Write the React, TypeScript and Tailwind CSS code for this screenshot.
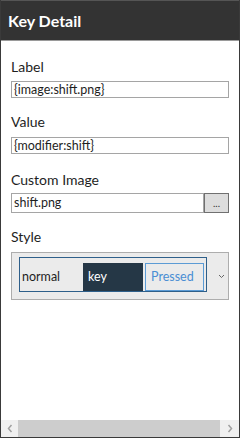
import React from "react";

const font = { fontFamily: 'Lato, "Open Sans", sans-serif' };

export default function App() {
  return (
    <div
      className="w-[240px] h-[438px] flex flex-col bg-white border-x border-b border-[#3a3a3a] overflow-hidden"
      style={font}
    >
      <div className="h-[40px] shrink-0 bg-[#333333] border-t border-[#555555] flex items-center pl-[7px]">
        <span className="text-white font-bold text-[16px] leading-none">Key Detail</span>
      </div>
      <div className="h-px bg-[#9a9a9a] shrink-0" />
      <div className="flex-1 px-[10px]">
        <div className="mt-[16px]">
          <div className="text-[14px] leading-[20px] text-[#1e1e1e]">Label</div>
          <div className="mt-[4px] h-[17px] border border-[#a5a5a5] bg-white px-[2px] text-[12.5px] leading-[15px] text-[#1e1e1e]">
            {"{image:shift.png}"}
          </div>
        </div>
        <div className="mt-[14px]">
          <div className="text-[14px] leading-[20px] text-[#1e1e1e]">Value</div>
          <div className="mt-[5px] h-[17px] border border-[#a5a5a5] bg-white px-[2px] text-[12.5px] leading-[15px] text-[#1e1e1e]">
            {"{modifier:shift}"}
          </div>
        </div>
        <div className="mt-[16px]">
          <div className="text-[14px] leading-[20px] text-[#1e1e1e]">Custom Image</div>
          <div className="mt-[3px] flex h-[20px]">
            <div className="flex-1 border border-[#a5a5a5] bg-white px-[2px] text-[12.5px] leading-[18px] text-[#1e1e1e]">
              shift.png
            </div>
            <div className="w-[25px] border border-[#707070] bg-[#dddddd] flex items-center justify-center text-[10px] leading-none text-[#333]">
              ...
            </div>
          </div>
        </div>
        <div className="mt-[14px]">
          <div className="text-[14px] leading-[20px] text-[#1e1e1e]">Style</div>
          <div className="mt-[5px] h-[48px] border border-[#adadad] bg-[#ebebeb] flex items-start pt-[4px] pl-[7px]">
            <div className="w-[188px] h-[35px] border border-[#2e5f8a] flex items-end pl-[2px]">
              <div className="w-[61px] h-[28px] flex items-center text-[12.5px] text-[#1e1e1e]">normal</div>
              <div className="w-[60px] h-[28px] bg-[#253746] flex items-center pl-[5px] text-[12.5px] text-white">
                key
              </div>
              <div className="ml-[2px] w-[59px] h-[28px] border border-[#5b9bd5] flex items-center pl-[5px] text-[12.5px] text-[#4a8ed4]">
                Pressed
              </div>
            </div>
            <div className="flex-1 self-stretch flex items-center pl-[11px] pb-[4px]">
              <svg width="7" height="5" viewBox="0 0 7 5">
                <path d="M1 1 L3.5 3.5 L6 1" fill="none" stroke="#666" strokeWidth="1" />
              </svg>
            </div>
          </div>
        </div>
      </div>
      <div className="h-[17px] shrink-0 flex">
        <div className="w-[17px] bg-[#f0f0f0] flex items-center justify-center">
          <svg width="6" height="9" viewBox="0 0 6 9">
            <path d="M4.5 1 L1.5 4.5 L4.5 8" fill="none" stroke="#a0a0a0" strokeWidth="1.5" />
          </svg>
        </div>
        <div className="flex-1 bg-[#cdcdcd]" />
        <div className="w-[19px] bg-[#f0f0f0] flex items-center justify-center">
          <svg width="6" height="9" viewBox="0 0 6 9">
            <path d="M1.5 1 L4.5 4.5 L1.5 8" fill="none" stroke="#a0a0a0" strokeWidth="1.5" />
          </svg>
        </div>
      </div>
    </div>
  );
}
